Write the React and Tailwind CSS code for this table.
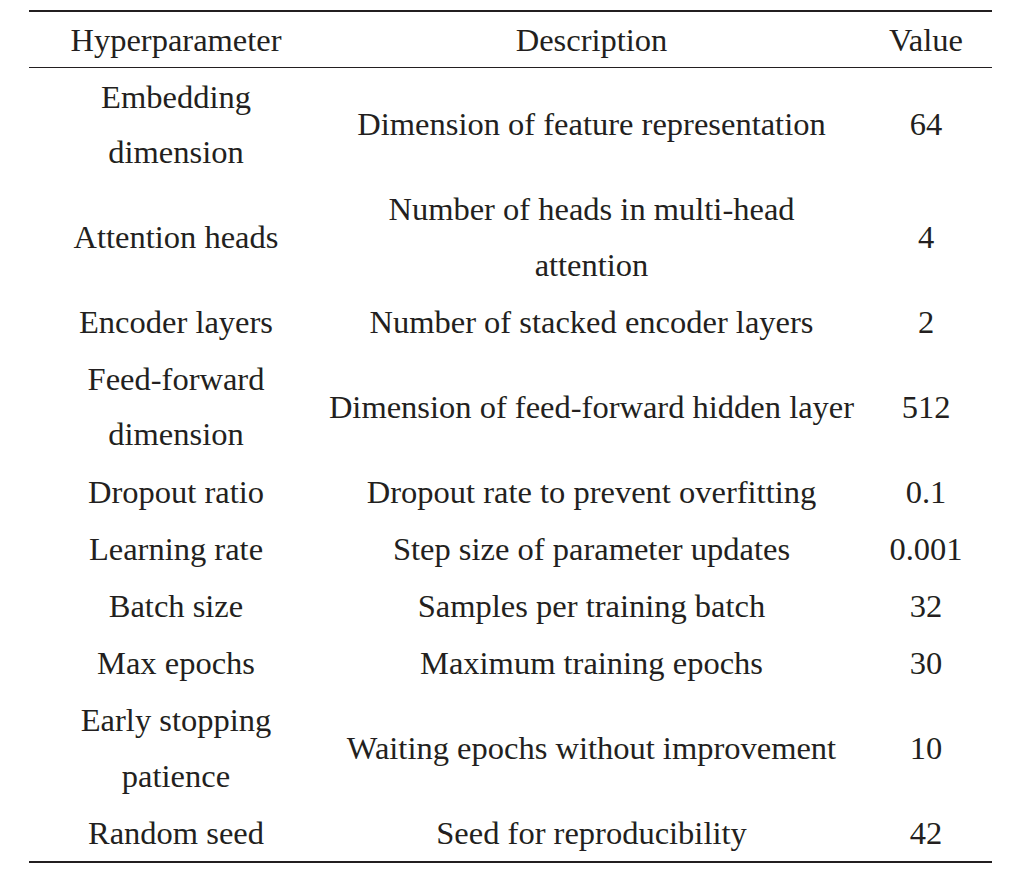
import React from "react";

const rows = [
  { name: ["Embedding", "dimension"], desc: ["Dimension of feature representation"], value: "64" },
  { name: ["Attention heads"], desc: ["Number of heads in multi-head", "attention"], value: "4" },
  { name: ["Encoder layers"], desc: ["Number of stacked encoder layers"], value: "2" },
  { name: ["Feed-forward", "dimension"], desc: ["Dimension of feed-forward hidden layer"], value: "512" },
  { name: ["Dropout ratio"], desc: ["Dropout rate to prevent overfitting"], value: "0.1" },
  { name: ["Learning rate"], desc: ["Step size of parameter updates"], value: "0.001" },
  { name: ["Batch size"], desc: ["Samples per training batch"], value: "32" },
  { name: ["Max epochs"], desc: ["Maximum training epochs"], value: "30" },
  { name: ["Early stopping", "patience"], desc: ["Waiting epochs without improvement"], value: "10" },
  { name: ["Random seed"], desc: ["Seed for reproducibility"], value: "42" },
];

function Lines({ lines }) {
  return (
    <div className="flex flex-col items-center">
      {lines.map((l, i) => (
        <span key={i} className="whitespace-nowrap">
          {l}
        </span>
      ))}
    </div>
  );
}

export default function App() {
  return (
    <div
      className="w-[1022px] h-[879px] bg-white text-[#231f20] overflow-hidden"
      style={{ fontFamily: '"Liberation Serif", "Times New Roman", serif' }}
    >
      <div className="h-[10px] overflow-hidden">
        <div className="-mt-[40px] pl-[181px] text-[38px] leading-[38px] font-bold whitespace-nowrap">
          Table 3. Hyperparameters
        </div>
      </div>
      <div className="ml-[29px] w-[963px] border-t-2 border-b-2 border-[#231f20] text-[32.5px]">
        <div className="grid grid-cols-[294px_537px_132px] h-[56px] items-center leading-[56px] text-center border-b border-[#231f20]">
          <div>Hyperparameter</div>
          <div>Description</div>
          <div>Value</div>
        </div>
        {rows.map((r, i) => (
          <div
            key={i}
            className="grid grid-cols-[294px_537px_132px] items-center text-center leading-[55.4px] pt-[1.75px]"
          >
            <Lines lines={r.name} />
            <Lines lines={r.desc} />
            <div>{r.value}</div>
          </div>
        ))}
      </div>
    </div>
  );
}
